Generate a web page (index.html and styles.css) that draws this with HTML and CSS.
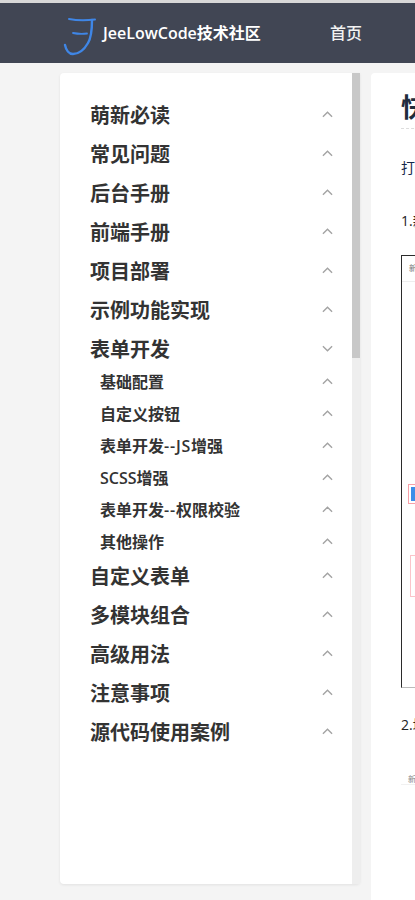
FILE: index.html
```html
<!DOCTYPE html>
<html lang="zh">
<head>
<meta charset="utf-8">
<title>JeeLowCode技术社区</title>
<link rel="stylesheet" href="styles.css">
</head>
<body>
<header class="topbar">
  <div class="brand">
    <svg class="logo" width="34" height="40" viewBox="0 0 34 40" fill="none" stroke="#3f86e6" stroke-linecap="round">
      <path d="M6 3 C14 4.500 23 4.500 32 3.500" stroke-width="2"/>
      <path d="M10 17 C15 18 20 18 24 17.500" stroke-width="1.800"/>
      <path d="M29 4 C29 14 28 22 25 27 C21 34 15 38 10 38 C6 38 3 34 2 29" stroke-width="2.400"/>
    </svg>
    <span class="brand-name"><span class="brand-latin">JeeLowCode</span>技术社区</span>
  </div>
  <nav class="nav"><span class="nav-item">首页</span></nav>
</header>
<main class="layout">
  <aside class="sidebar">
    <ul class="menu">
      <li class="item"><span>萌新必读</span><svg class="chev" viewBox="0 0 12 7"><path d="M1 6l5-5 5 5"/></svg></li>
      <li class="item"><span>常见问题</span><svg class="chev" viewBox="0 0 12 7"><path d="M1 6l5-5 5 5"/></svg></li>
      <li class="item"><span>后台手册</span><svg class="chev" viewBox="0 0 12 7"><path d="M1 6l5-5 5 5"/></svg></li>
      <li class="item"><span>前端手册</span><svg class="chev" viewBox="0 0 12 7"><path d="M1 6l5-5 5 5"/></svg></li>
      <li class="item"><span>项目部署</span><svg class="chev" viewBox="0 0 12 7"><path d="M1 6l5-5 5 5"/></svg></li>
      <li class="item"><span>示例功能实现</span><svg class="chev" viewBox="0 0 12 7"><path d="M1 6l5-5 5 5"/></svg></li>
      <li class="item"><span>表单开发</span><svg class="chev" viewBox="0 0 12 7"><path d="M1 1l5 5 5-5"/></svg></li>
      <li class="group">
        <ul class="submenu">
          <li class="item sub"><span>基础配置</span><svg class="chev" viewBox="0 0 12 7"><path d="M1 6l5-5 5 5"/></svg></li>
          <li class="item sub"><span>自定义按钮</span><svg class="chev" viewBox="0 0 12 7"><path d="M1 6l5-5 5 5"/></svg></li>
          <li class="item sub"><span>表单开发<span class="latin wide">--JS</span>增强</span><svg class="chev" viewBox="0 0 12 7"><path d="M1 6l5-5 5 5"/></svg></li>
          <li class="item sub"><span><span class="latin">SCSS</span>增强</span><svg class="chev" viewBox="0 0 12 7"><path d="M1 6l5-5 5 5"/></svg></li>
          <li class="item sub"><span>表单开发<span class="latin wide">--</span>权限校验</span><svg class="chev" viewBox="0 0 12 7"><path d="M1 6l5-5 5 5"/></svg></li>
          <li class="item sub"><span>其他操作</span><svg class="chev" viewBox="0 0 12 7"><path d="M1 6l5-5 5 5"/></svg></li>
        </ul>
      </li>
      <li class="item"><span>自定义表单</span><svg class="chev" viewBox="0 0 12 7"><path d="M1 6l5-5 5 5"/></svg></li>
      <li class="item"><span>多模块组合</span><svg class="chev" viewBox="0 0 12 7"><path d="M1 6l5-5 5 5"/></svg></li>
      <li class="item"><span>高级用法</span><svg class="chev" viewBox="0 0 12 7"><path d="M1 6l5-5 5 5"/></svg></li>
      <li class="item"><span>注意事项</span><svg class="chev" viewBox="0 0 12 7"><path d="M1 6l5-5 5 5"/></svg></li>
      <li class="item"><span>源代码使用案例</span><svg class="chev" viewBox="0 0 12 7"><path d="M1 6l5-5 5 5"/></svg></li>
    </ul>
    <div class="scrolltrack"><div class="scrollthumb"></div></div>
  </aside>
  <article class="content">
    <h1 class="title">快速开始</h1>
    <p class="intro">打开表单开发页面</p>
    <p class="step">1.新建表单</p>
    <div class="shot">
      <div class="shot-head">新增表单</div>
      <div class="mark mark-check"><span class="checkbox"></span></div>
      <div class="mark mark-box"></div>
    </div>
    <p class="step step-two">2.填写信息</p>
    <div class="shot-plain"><span class="shot-label">新增</span></div>
  </article>
</main>
</body>
</html>
```
FILE: styles.css
```css
* { box-sizing: border-box; }
html, body { margin: 0; padding: 0; }
body {
  width: 415px;
  height: 900px;
  overflow: hidden;
  background: #f4f4f4;
  font-family: "Open Sans", "Noto Sans CJK SC", sans-serif;
  color: #333;
}
.topbar {
  height: 63px;
  border-top: 3px solid #d8d8d8;
  background: #414654;
  display: flex;
  align-items: center;
  padding: 0 0 2px 63px;
  white-space: nowrap;
}
.brand { display: flex; align-items: center; width: 267px; flex: none; }
.logo { flex: none; margin: 8px 6px 0 0; }
.brand-name { color: #fff; font-size: 16px; font-weight: 700; }
.brand-latin { font-weight: 600; }
.nav-item { color: #f2f2f2; font-size: 16px; font-weight: 500; }
.layout {
  display: flex;
  align-items: flex-start;
  padding: 10px 0 0 60px;
  gap: 11px;
  width: 415px;
}
.sidebar {
  position: relative;
  width: 300px;
  height: 811px;
  flex: none;
  background: #fff;
  border-radius: 4px 0 4px 4px;
  box-shadow: 0 1px 3px rgba(0,0,0,.08);
}
.menu { list-style: none; margin: 0; padding: 25px 19px 0 30px; width: 292px; }
.submenu { list-style: none; margin: -6px 0 2px; padding: 0; }
.item {
  height: 32px;
  margin-bottom: 7px;
  display: flex;
  align-items: center;
  justify-content: space-between;
  font-size: 20px;
  font-weight: 700;
  color: #333;
}
.item.sub { height: 32px; margin-bottom: 0; font-size: 16px; padding-left: 10px; }
.latin { font-weight: 600; }
.wide { letter-spacing: .8px; }
.chev { width: 11px; height: 7px; fill: none; stroke: #a3a3a3; stroke-width: 1.500; flex: none; }
.scrolltrack { position: absolute; top: 0; right: 0; width: 8px; height: 100%; background: #eee; }
.scrollthumb { height: 285px; background: #c8c8c8; }
.content {
  width: 200px;
  height: 840px;
  flex: none;
  background: #fff;
  border-radius: 4px 0 0 0;
  padding: 12px 0 0 30px;
  overflow: hidden;
  color: #0b1b33;
}
.title {
  margin: 0;
  height: 44px;
  font-size: 26px;
  line-height: 44px;
  font-weight: 700;
  white-space: nowrap;
  color: #1f2d3d;
  border-bottom: 1px dashed #ddd;
}
.intro { margin: 28px 0 0; font-size: 14px; line-height: 22px; white-space: nowrap; color: #14284a; }
.step { margin: 31px 0 0; font-size: 14px; line-height: 22px; white-space: nowrap; color: #222; }
.shot {
  position: relative;
  margin-top: 23px;
  height: 433px;
  border: 1px solid #2b2b2b;
  border-right: 0;
  border-bottom-color: #bbb;
}
.shot-head { height: 26px; padding: 4px 0 0 7px; font-size: 8px; line-height: 16px; color: #777; border-bottom: 1px solid #eee; white-space: nowrap; }
.mark { position: absolute; }
.mark-check { top: 228px; left: 6px; width: 10px; height: 20px; border: 1px solid #f8a0a8; padding: 2px 0 0 2px; }
.checkbox { display: block; width: 8px; height: 14px; background: #3d8ee8; }
.mark-box { top: 299px; left: 8px; width: 10px; height: 42px; border: 1px solid #fbc4ca; }
.step-two { margin-top: 26px; }
.shot-plain { margin-top: 23px; height: 26px; border-bottom: 1px solid #f1f1f1; padding: 6px 0 0 7px; }
.shot-label { font-size: 8px; line-height: 12px; color: #888; white-space: nowrap; }
```
